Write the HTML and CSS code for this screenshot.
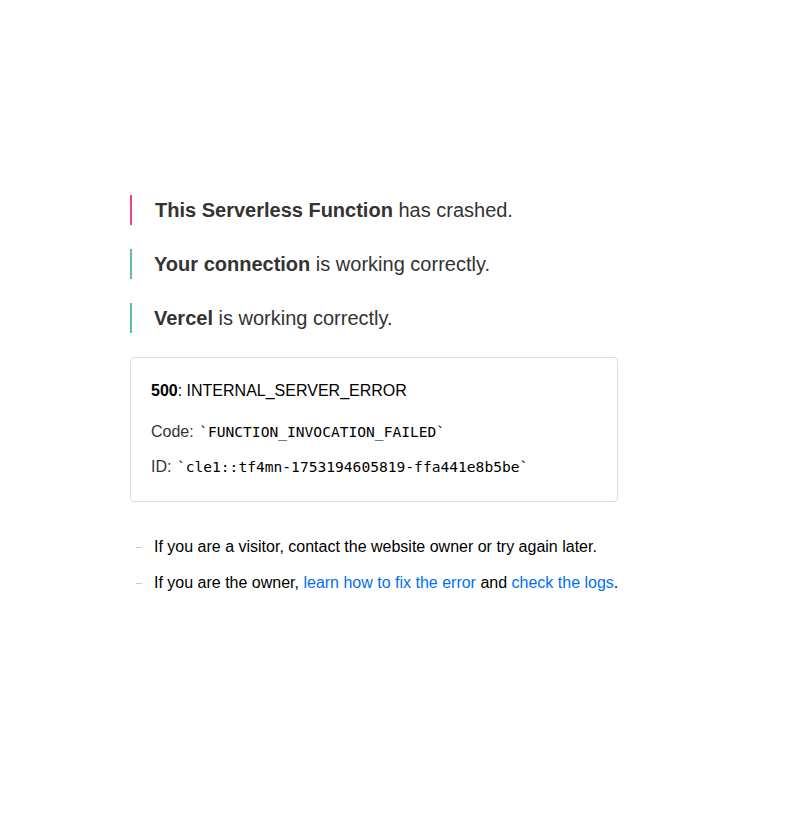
FILE: index.html
```html
<!DOCTYPE html>
<html lang="en">
<head>
<meta charset="utf-8">
<title>500: INTERNAL_SERVER_ERROR</title>
<link rel="stylesheet" href="styles.css">
</head>
<body>
<main class="page">
  <div class="status failure"><strong>This Serverless Function</strong> has crashed.</div>
  <div class="status success"><strong>Your connection</strong> is working correctly.</div>
  <div class="status success"><strong>Vercel</strong> is working correctly.</div>
  <div class="devinfo">
    <p class="error-code"><strong>500</strong>: INTERNAL_SERVER_ERROR</p>
    <p class="devinfo-line">Code: <code>`FUNCTION_INVOCATION_FAILED`</code></p>
    <p class="devinfo-line id-line">ID: <code>`cle1::tf4mn-1753194605819-ffa441e8b5be`</code></p>
  </div>
  <ul class="help">
    <li>If you are a visitor, contact the website owner or try again later.</li>
    <li>If you are the owner, <a href="#">learn how to fix the error</a> and <a href="#">check the logs</a>.</li>
  </ul>
</main>
</body>
</html>
```
FILE: styles.css
```css
html, body {
  margin: 0;
  padding: 0;
  background: #fff;
}
body {
  font-family: "Liberation Sans", Arial, sans-serif;
  color: #000;
}
.page {
  width: 488px;
  margin-left: 130px;
  padding-top: 195px;
  display: flex;
  flex-direction: column;
}
.status {
  border-left: 2px solid #f0407f;
  padding-left: 23px;
  font-size: 20px;
  line-height: 29px;
  padding-top: 1px;
  height: 29px;
  box-sizing: content-box;
  color: #333;
  margin-bottom: 24px;
}
.status.success {
  border-left-color: #5cbf9b;
  padding-left: 22px;
}
.status strong {
  font-weight: bold;
}
.devinfo {
  border: 1px solid #ddd;
  border-radius: 4px;
  padding: 20px 20px 17px 20px;
}
.devinfo p {
  margin: 0;
}
.error-code {
  font-size: 16px;
  line-height: 26px;
  color: #000;
  margin-bottom: 11px !important;
}
.devinfo-line {
  font-size: 16px;
  line-height: 34px;
  color: #333;
}
.id-line {
  line-height: 35px;
}
.devinfo-line code {
  font-family: "DejaVu Sans Mono", monospace;
  font-size: 14.6px;
  color: #000;
  margin-left: 1px;
}
.help {
  list-style: none;
  margin: 27px 0 0 0;
  padding: 0;
  font-size: 16px;
  line-height: 36px;
  color: #000;
  white-space: nowrap;
}
.help li {
  position: relative;
  padding-left: 24px;
}
.help li::before {
  content: "";
  position: absolute;
  left: 6px;
  top: 18px;
  width: 6px;
  height: 1px;
  background: #c8c8c8;
}
.help a {
  color: #0070f3;
  text-decoration: none;
}
```
